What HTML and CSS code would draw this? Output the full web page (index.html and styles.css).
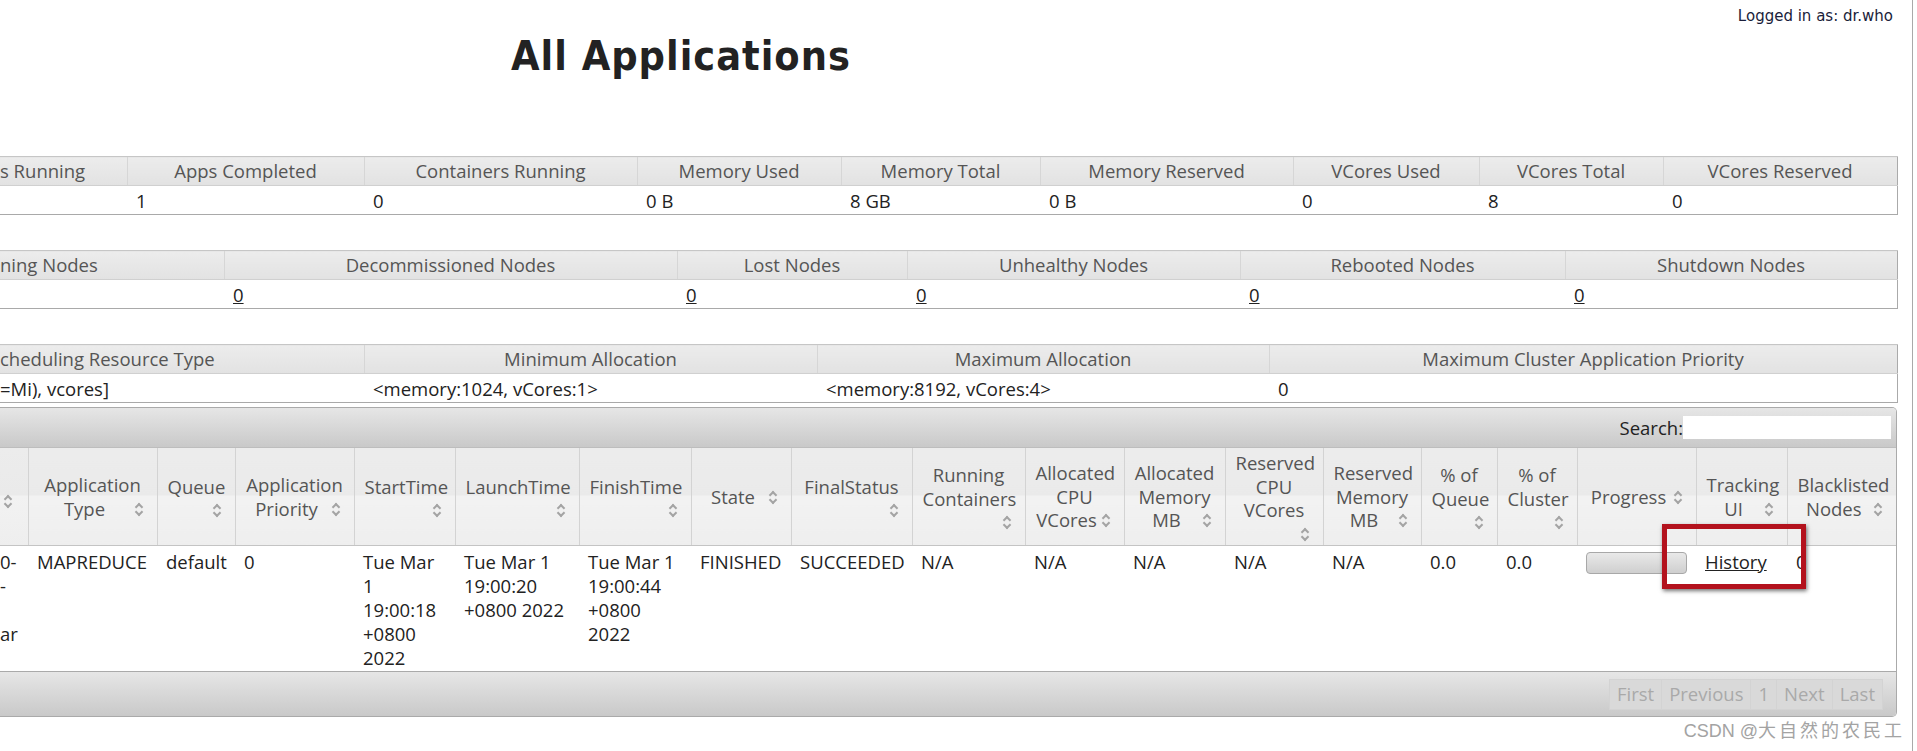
FILE: index.html
```html
<!DOCTYPE html>
<html lang="en">
<head>
    <meta charset="UTF-8">
    <title>All Applications</title>
    <link rel="stylesheet" href="styles.css">
</head>
<body>
<div class="page">
    <div class="login">Logged in as: dr.who</div>
    <h1>All Applications</h1>

    <!-- cluster metrics -->
    <table class="info">
        <colgroup>
            <col style="width:127px"><col style="width:237px"><col style="width:273px"><col style="width:204px"><col style="width:199px"><col style="width:253px"><col style="width:186px"><col style="width:184px"><col style="width:234px">
        </colgroup>
        <tr>
            <th class="cut">s Running</th><th>Apps Completed</th><th>Containers Running</th><th>Memory Used</th><th>Memory Total</th><th>Memory Reserved</th><th>VCores Used</th><th>VCores Total</th><th>VCores Reserved</th>
        </tr>
        <tr>
            <td></td><td>1</td><td>0</td><td>0 B</td><td>8 GB</td><td>0 B</td><td>0</td><td>8</td><td>0</td>
        </tr>
    </table>

    <!-- node metrics -->
    <table class="info">
        <colgroup>
            <col style="width:224px"><col style="width:453px"><col style="width:230px"><col style="width:333px"><col style="width:325px"><col style="width:332px">
        </colgroup>
        <tr>
            <th class="cut">ning Nodes</th><th>Decommissioned Nodes</th><th>Lost Nodes</th><th>Unhealthy Nodes</th><th>Rebooted Nodes</th><th>Shutdown Nodes</th>
        </tr>
        <tr>
            <td></td><td><a href="#">0</a></td><td><a href="#">0</a></td><td><a href="#">0</a></td><td><a href="#">0</a></td><td><a href="#">0</a></td>
        </tr>
    </table>

    <!-- scheduler metrics -->
    <table class="info">
        <colgroup>
            <col style="width:364px"><col style="width:453px"><col style="width:452px"><col style="width:628px">
        </colgroup>
        <tr>
            <th class="cut">cheduling Resource Type</th><th>Minimum Allocation</th><th>Maximum Allocation</th><th>Maximum Cluster Application Priority</th>
        </tr>
        <tr>
            <td class="cut">=Mi), vcores]</td><td>&lt;memory:1024, vCores:1&gt;</td><td>&lt;memory:8192, vCores:4&gt;</td><td>0</td>
        </tr>
    </table>

    <div class="apps-wrap">
        <div class="toolbar top">
            <label class="search">Search:<input type="text"></label>
        </div>
        <table class="apps">
            <colgroup>
                <col style="width:28px"><col style="width:129px"><col style="width:78px"><col style="width:119px"><col style="width:101px"><col style="width:124px"><col style="width:112px"><col style="width:100px"><col style="width:121px"><col style="width:113px"><col style="width:99px"><col style="width:101px"><col style="width:98px"><col style="width:98px"><col style="width:76px"><col style="width:80px"><col style="width:119px"><col style="width:91px"><col style="width:109px">
            </colgroup>
            <thead>
                <tr>
                    <th class="cut"><span class="sort"></span></th>
                    <th>Application Type<span class="sort"></span></th>
                    <th>Queue<span class="sort"></span></th>
                    <th>Application Priority<span class="sort"></span></th>
                    <th>StartTime<span class="sort"></span></th>
                    <th>LaunchTime<span class="sort"></span></th>
                    <th>FinishTime<span class="sort"></span></th>
                    <th>State<span class="sort"></span></th>
                    <th>FinalStatus<span class="sort"></span></th>
                    <th>Running Containers<span class="sort"></span></th>
                    <th>Allocated CPU VCores<span class="sort"></span></th>
                    <th>Allocated Memory MB<span class="sort"></span></th>
                    <th class="icon-below">Reserved CPU VCores<span class="sort"></span></th>
                    <th>Reserved Memory MB<span class="sort"></span></th>
                    <th>% of Queue<span class="sort"></span></th>
                    <th>% of Cluster<span class="sort"></span></th>
                    <th>Progress<span class="sort"></span></th>
                    <th>Tracking UI<span class="sort"></span></th>
                    <th>Blacklisted Nodes<span class="sort"></span></th>
                </tr>
            </thead>
            <tbody>
                <tr>
                    <td class="cut">0-<br>-<br><br>ar</td>
                    <td>MAPREDUCE</td>
                    <td>default</td>
                    <td>0</td>
                    <td>Tue Mar 1 19:00:18 +0800 2022</td>
                    <td>Tue Mar 1 19:00:20 +0800 2022</td>
                    <td>Tue Mar 1 19:00:44 +0800 2022</td>
                    <td>FINISHED</td>
                    <td>SUCCEEDED</td>
                    <td>N/A</td>
                    <td>N/A</td>
                    <td>N/A</td>
                    <td>N/A</td>
                    <td>N/A</td>
                    <td>0.0</td>
                    <td>0.0</td>
                    <td><div class="bar"></div></td>
                    <td><a href="#">History</a></td>
                    <td>0</td>
                </tr>
            </tbody>
        </table>
        <div class="toolbar bottom">
            <div class="pager">
                <span>First</span><span>Previous</span><span>1</span><span>Next</span><span>Last</span>
            </div>
        </div>
    </div>

    <div class="callout"></div>
    <div class="mark">CSDN @<span>大自然的农民工</span></div>
</div>
</body>
</html>
```

FILE: styles.css
```css
body {
    margin: 0;
    font-family: "Open Sans", "Noto Sans", sans-serif;
    font-size: 18.5px;
    color: #222;
    background: #fff;
}
.page {
    position: relative;
    width: 1912px;
    height: 751px;
    border-right: 1px solid #a9a9a9;
    overflow: hidden;
}
.login {
    padding: 7px 19px 0 0;
    text-align: right;
    font-family: "DejaVu Sans", sans-serif;
    font-size: 15px;
    line-height: 18px;
    color: #1a1d3a;
}
h1 {
    margin: 8px 0 0 511px;
    font-family: "DejaVu Sans Condensed", "DejaVu Sans", sans-serif;
    font-stretch: condensed;
    font-size: 41px;
    line-height: 47px;
    letter-spacing: 1px;
    font-weight: bold;
    color: #222;
}
a {
    color: #222;
    text-decoration: underline;
}

/* small info tables */
table.info {
    width: 1897px;
    table-layout: fixed;
    border-collapse: collapse;
    margin-top: 35px;
    border-right: 1px solid #aaa;
}
table.info:first-of-type {
    margin-top: 76px;
}
.info th {
    font-weight: normal;
    color: #555;
    line-height: 24px;
    padding: 2px 10px;
    text-align: center;
    white-space: nowrap;
    overflow: hidden;
    background: linear-gradient(#ececec, #e2e2e2);
    border-top: 1px solid #c6c6c6;
    border-bottom: 1px solid #d0d0d0;
    border-left: 1px solid #d6d6d6;
}
.info td {
    line-height: 24px;
    padding: 3px 9px 1px;
    white-space: nowrap;
    border-bottom: 1px solid #a9a9a9;
}
.info .cut {
    text-align: left;
    padding-left: 0;
    border-left: 0;
}

/* applications datatable */
.apps-wrap {
    width: 1897px;
    box-sizing: border-box;
    margin-top: 4px;
    border: 1px solid #aaa;
    border-left: 0;
    border-radius: 0 5px 5px 0;
    overflow: hidden;
}
.toolbar {
    display: flex;
    justify-content: flex-end;
    align-items: center;
    background: linear-gradient(#e6e6e6, #c9c9c9);
}
.toolbar.top {
    height: 39px;
    padding-right: 5px;
    border-bottom: 1px solid #bdbdbd;
}
.toolbar.bottom {
    height: 44px;
    padding-right: 13px;
    border-top: 1px solid #aaa;
}
.search {
    display: flex;
    align-items: center;
}
.search input {
    width: 208px;
    height: 23px;
    margin: 0;
    padding: 0;
    border: 0;
    background: #fff;
}
table.apps {
    width: 100%;
    table-layout: fixed;
    border-collapse: collapse;
}
.apps th {
    height: 93px;
    padding: 2px 10px;
    font-weight: normal;
    color: #555;
    line-height: 23.4px;
    text-align: center;
    vertical-align: middle;
    background: linear-gradient(#ececec 0%, #eaeaea 48%, #f2f2f2 50%, #eeeeee 100%);
    border-left: 1px solid #d3d3d3;
    border-bottom: 1px solid #c4c4c4;
}
.apps th.cut {
    padding: 0;
    text-align: left;
    border-left: 0;
}
.apps td {
    padding: 4px 9px 1px;
    line-height: 24px;
    vertical-align: top;
}
.apps td.cut {
    padding-left: 0;
    overflow: hidden;
}
.sort {
    float: right;
    position: relative;
    width: 16px;
    height: 16px;
    margin-top: 4px;
}
.cut .sort {
    float: none;
    display: inline-block;
    vertical-align: middle;
}
.icon-below .sort {
    float: none;
    display: block;
    margin-left: auto;
}
.sort::before,
.sort::after {
    content: "";
    position: absolute;
    left: 5px;
    width: 4px;
    height: 4px;
    border-left: 2px solid #a4a4a4;
    border-top: 2px solid #a4a4a4;
}
.sort::before {
    top: 3px;
    transform: rotate(45deg);
}
.sort::after {
    top: 8px;
    transform: rotate(225deg);
}
.bar {
    height: 20px;
    margin-top: 2px;
    border: 1px solid #a8a8a8;
    border-radius: 4px;
    background: linear-gradient(#e9e9e9, #cfcfcf);
}
.pager {
    display: flex;
    background: #d9d9d9;
}
.pager span {
    padding: 2px 7px 3px;
    line-height: 24px;
    color: #a9a9a9;
    border: 1px solid #d3d3d3;
    border-left: 0;
}
.pager span:first-child {
    border-left: 1px solid #d3d3d3;
}

/* screenshot annotations */
.callout {
    position: absolute;
    left: 1662px;
    top: 524px;
    width: 144px;
    height: 65px;
    box-sizing: border-box;
    border: 5px solid #b3121d;
    box-shadow: 1px 2px 4px rgba(0, 0, 0, 0.55);
}
.mark {
    position: absolute;
    right: 7px;
    top: 716px;
    font-family: "Liberation Sans", "Noto Sans CJK SC", sans-serif;
    font-size: 18px;
    color: #a3a3a3;
    white-space: nowrap;
}
.mark span {
    font-family: "Noto Sans CJK SC", sans-serif;
    font-size: 18px;
    letter-spacing: 3px;
}
```
